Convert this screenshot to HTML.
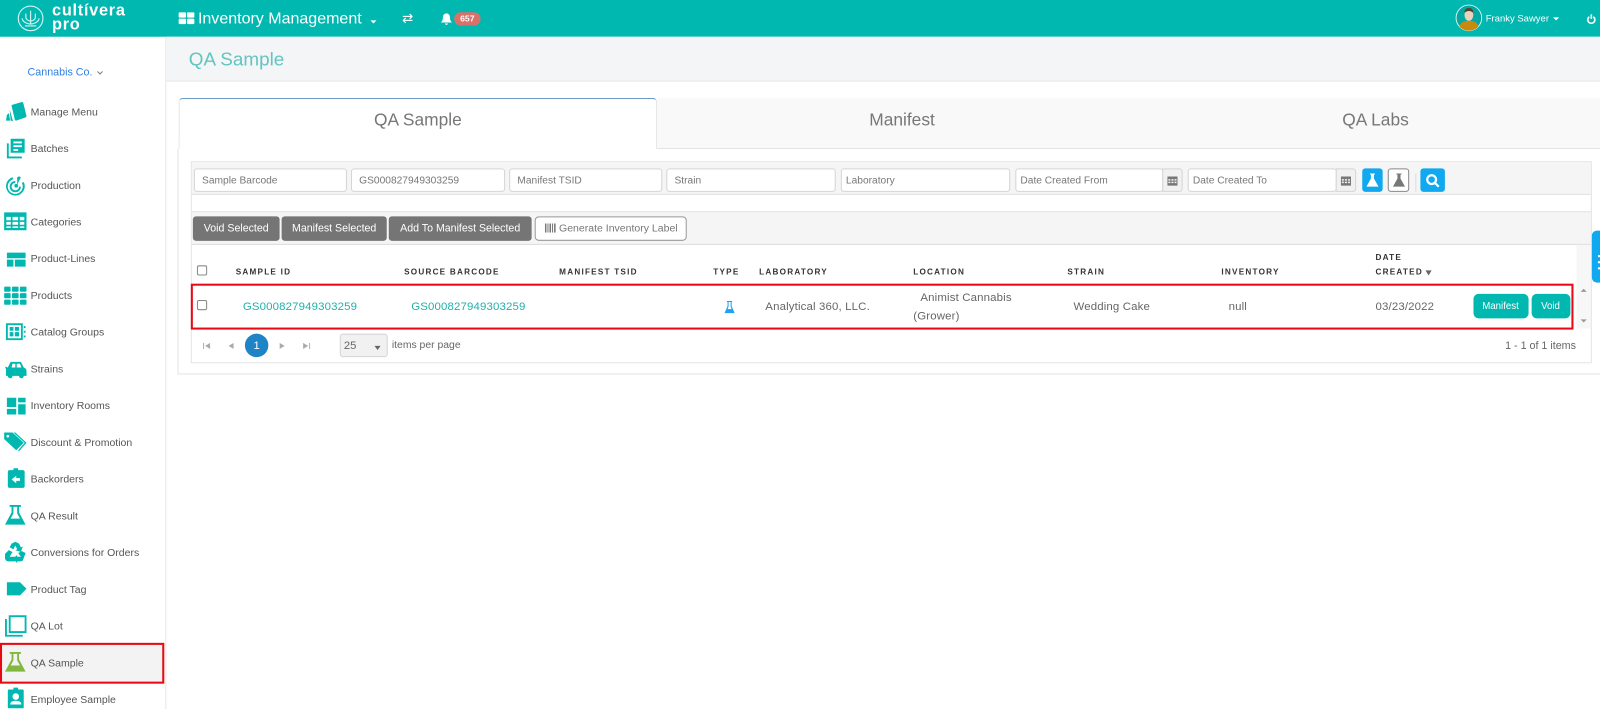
<!DOCTYPE html>
<html><head><meta charset="utf-8"><style>
*{box-sizing:border-box}
html,body{margin:0;padding:0;width:1600px;height:709px;overflow:hidden;background:#fff;font-family:"Liberation Sans",sans-serif;color:#666}
#w{position:absolute;left:0;top:0;width:1568px;height:695px;overflow:hidden;transform:scale(1.02041);transform-origin:0 0}
.a{position:absolute;white-space:nowrap}
.box{position:absolute}
.nav{position:absolute;left:30px;margin-top:1.700px;font-size:10.300px;color:#555;line-height:14px;white-space:nowrap}
.ic{position:absolute;left:4px;margin-top:1px;width:22px;height:22px;fill:#00b8b0}
.inp{position:absolute;top:165px;height:23px;background:#fff;border:1px solid #d5d5d5;border-radius:3px;font-size:10px;line-height:23px;color:#777;padding-left:7px;white-space:nowrap}
.cal{position:absolute;top:165px;width:20px;height:23px;background:#f1f1f1;border:1px solid #d5d5d5;border-radius:0 3px 3px 0}
.cal svg{position:absolute;left:4px;top:6px}
.gb{position:absolute;top:212px;height:24px;background:#757575;border-radius:3px;color:#fff;font-size:10.400px;line-height:26px;text-align:center;white-space:nowrap}
.th{position:absolute;font-size:8px;font-weight:bold;letter-spacing:1.200px;color:#333;white-space:nowrap;line-height:10px}
.td{position:absolute;font-size:11.200px;color:#666;letter-spacing:.15px;white-space:nowrap;line-height:14px}
.lk{color:#21b0aa}
.tb{position:absolute;top:288px;height:24px;background:#00b8b0;border-radius:5px;color:#fff;font-size:9.500px;line-height:25px;text-align:center}
.cb{position:absolute;width:10px;height:10px;border:1px solid #888;border-radius:2px;background:#fff}
.tab{position:absolute;top:96px;height:46px;font-size:17px;line-height:44px;text-align:center;color:#777}
</style></head><body><div id="w">

<!-- top bar -->
<div class="box" style="left:0;top:0;width:1568px;height:35.500px;background:#00b8b0"></div>
<svg class="box" style="left:17px;top:5px" width="26" height="26" viewBox="0 0 28 28" fill="none" stroke="#d6f3f1" stroke-width="1.200"><circle cx="14" cy="14" r="13"/><path d="M14 6v14M9 9v4q0 3 5 4M19 9v4q0 3-5 4M5 14q1 5 9 6M23 14q-1 5-9 6M8 22h12"/></svg>
<div class="a" style="left:51px;top:4px;font-size:16px;font-weight:bold;color:#fff;line-height:14px;letter-spacing:.7px">cultívera<br>pro</div>
<svg class="box" style="left:175px;top:12px" width="16" height="12" fill="#fff"><rect width="7.300" height="5.300" rx="1"/><rect x="8.200" width="7.300" height="5.300" rx="1"/><rect y="6.300" width="7.300" height="5.300" rx="1"/><rect x="8.200" y="6.300" width="7.300" height="5.300" rx="1"/></svg>
<div class="a" style="left:194px;top:10px;font-size:15.700px;color:#fff;line-height:18px">Inventory Management</div>
<div class="box" style="left:363px;top:20px;border:3px solid transparent;border-top-color:#fff"></div>
<div class="a" style="left:394px;top:11px;font-size:13px;color:#fff;line-height:15px;font-family:'DejaVu Sans',sans-serif">⇄</div>
<svg class="box" style="left:432px;top:13px" width="11" height="12" viewBox="0 0 11 12" fill="#fff"><path d="M5.500 0q3.500.5 3.500 4.500 0 3 2 4.500H0q2-1.500 2-4.500Q2 .5 5.500 0zM4 10h3q-.5 1.500-1.500 1.500T4 10z"/></svg>
<div class="a" style="left:445px;top:12px;width:26px;height:13px;border-radius:7px;background:#d9716b;color:#fff;font-size:8.500px;font-weight:bold;line-height:13px;text-align:center">657</div>
<svg class="box" style="left:1426px;top:4px" width="27" height="27" viewBox="0 0 28 28"><circle cx="14" cy="14" r="13" fill="#00a9a2" stroke="#d8f3f2"/><path d="M4.500 23q1-6 9.500-6t9.500 6q-4 4-9.500 4t-9.500-4z" fill="#c78a0c"/><ellipse cx="14" cy="11" rx="4.500" ry="6" fill="#ecd2bc"/><path d="M9.500 9q0-5 4.500-5t4.500 5q-2-2-4.500-2t-4.500 2z" fill="#5b4030"/></svg>
<div class="a" style="left:1456px;top:12px;font-size:9.300px;color:#fff;line-height:13px">Franky Sawyer</div>
<div class="box" style="left:1522px;top:17px;border:3px solid transparent;border-top-color:#fff"></div>
<svg class="box" style="left:1555px;top:14px" width="9" height="10" viewBox="0 0 9 10" fill="none" stroke="#fff" stroke-width="1.600"><path d="M2.500 2.500a3.500 3.500 0 1 0 4 0M4.500 0v4.500"/></svg>

<!-- sidebar -->
<div class="box" style="left:162px;top:36px;width:1px;height:660px;background:#e7e7e7"></div>
<div class="a" style="left:27px;top:64px;font-size:10.500px;color:#2f80e0;line-height:14px">Cannabis Co.</div>
<svg class="box" style="left:95px;top:68.500px" width="6" height="5" fill="none" stroke="#777"><path d="M.5 1l2.500 2.500L5.500 1"/></svg>

<svg class="ic" style="top:98px" viewBox="0 0 24 24"><path d="M9 4l10-3q1 0 1.500 1L24 16q0 1-1 1.500L13 21q-1 0-1.500-1L8 5q0-1 1-1zM6 9l3.500 12.500L7 21zM3 15l2-2 1.500 8H2z"/></svg>
<div class="nav" style="top:102px">Manage Menu</div>
<svg class="ic" style="top:134px" viewBox="0 0 24 24"><path d="M7 1h15v15H7zM10 4v2h9V4zM10 8v2h9V8zM10 12v2h5v-2z" fill-rule="evenodd"/><path d="M3 6h2v14h14v2H3z"/></svg>
<div class="nav" style="top:138px">Batches</div>
<svg class="ic" style="top:170px" viewBox="0 0 24 24"><path d="M9 3a10 10 0 1 0 12 5l-2 1a8 8 0 1 1-9-4z"/><path d="M12 7a6 6 0 1 0 6 6h-2a4 4 0 1 1-4-4z"/><circle cx="13" cy="12" r="2"/><path d="M14 3l2-1 2 1-4 8z"/></svg>
<div class="nav" style="top:174px">Production</div>
<svg class="ic" style="top:206px" viewBox="0 0 20 20"><path fill-rule="evenodd" d="M0 1h20v16H0zM2 5v3h4V5zM7.500 5v3h5V5zM14 5v3h4V5zM2 9.500v2.500h4V9.500zM7.500 9.500v2.500h5V9.500zM14 9.500v2.500h4V9.500zM2 13.500V15h4v-1.500zM7.500 13.500V15h5v-1.500zM14 13.500V15h4v-1.500z"/></svg>
<div class="nav" style="top:210px">Categories</div>
<svg class="ic" style="top:242px" viewBox="0 0 24 24"><path d="M3 5h20v6H3zM3 12.500h7V20H3zM11.500 12.500H23V20H11.500z"/></svg>
<div class="nav" style="top:246px">Product-Lines</div>
<svg class="ic" style="top:278px" viewBox="0 0 24 24"><rect y="2" width="7" height="5.500" rx="1"/><rect x="8.500" y="2" width="7" height="5.500" rx="1"/><rect x="17" y="2" width="7" height="5.500" rx="1"/><rect y="9" width="7" height="5.500" rx="1"/><rect x="8.500" y="9" width="7" height="5.500" rx="1"/><rect x="17" y="9" width="7" height="5.500" rx="1"/><rect y="16" width="7" height="5.500" rx="1"/><rect x="8.500" y="16" width="7" height="5.500" rx="1"/><rect x="17" y="16" width="7" height="5.500" rx="1"/></svg>
<div class="nav" style="top:282px">Products</div>
<svg class="ic" style="top:314px" viewBox="0 0 24 24"><path fill-rule="evenodd" d="M2 2h18v18H2zM4 4v14h14V4zM6 6h4v4H6zM11.500 6H16v4h-4.500zM6 11.500h4V16H6zM11.500 11.500H16V16h-4.500z"/><path d="M21 5h2v2h-2zM21 10h2v2h-2zM21 15h2v2h-2z"/></svg>
<div class="nav" style="top:318px">Catalog Groups</div>
<svg class="ic" style="top:350px" viewBox="0 0 24 24"><path d="M7 4h11l3 6q3 1 3 4v5h-3a2.500 2.500 0 0 1-5 0H9a2.500 2.500 0 0 1-5 0H2v-7l-1-3 3 1z"/><path d="M9 6h3v4H8zM13.500 6H17l1.500 4h-5z" fill="#fff"/></svg>
<div class="nav" style="top:354px">Strains</div>
<svg class="ic" style="top:386px" viewBox="0 0 24 24"><path d="M3 3h10v10H3zM15 3h8v5h-8zM15 10h8v11h-8zM3 15h10v6H3z"/></svg>
<div class="nav" style="top:390px">Inventory Rooms</div>
<svg class="ic" style="top:421px" viewBox="0 0 24 24"><path fill-rule="evenodd" d="M0 2h9l12 11-8 8L0 9zM4 4.500a1.500 1.500 0 1 0 .01 0z"/><path d="M12 2l12 11-8 9-1-1 7-8L10 2z"/></svg>
<div class="nav" style="top:426px">Discount &amp; Promotion</div>
<svg class="ic" style="top:457px" viewBox="0 0 24 24"><path fill-rule="evenodd" d="M6 3h4V1h5v2h5q2 0 2 2v15q0 2-2 2H6q-2 0-2-2V5q0-2 2-2zM8 13l5-4v2.500h4v3h-4V17z"/></svg>
<div class="nav" style="top:462px">Backorders</div>
<svg class="ic" style="top:493px" viewBox="0 0 24 24"><path fill-rule="evenodd" d="M6 1h12v2h-2v6l7 13H1L8 9V3H6zM10 3v7l-3 5.500h10L14 10V3z"/></svg>
<div class="nav" style="top:498px">QA Result</div>
<svg class="ic" style="top:529px" viewBox="0 0 24 24"><path d="M8 3l4-2 4 2 2 4 2-1-2 6-6-2 2-1-2-4-2 4-4-2zM1 14l4-4 4 2-3 5h6v5H5q-3 0-4-3zM23 13l-3 8q-1 1-3 1h-3v2l-4-5 4-4v2h4l-3-4 4-2z"/></svg>
<div class="nav" style="top:534px">Conversions for Orders</div>
<svg class="ic" style="top:565px" viewBox="0 0 24 24"><path d="M3 5h14l7 7-7 7H3z"/></svg>
<div class="nav" style="top:570px">Product Tag</div>
<svg class="ic" style="top:601px" viewBox="0 0 24 24"><path fill-rule="evenodd" d="M5 1h19v19H5zM7 3v15h15V3z"/><path d="M1 5h2v17h17v2H1z"/></svg>
<div class="nav" style="top:606px">QA Lot</div>

<div class="box" style="left:0;top:630px;width:161px;height:39.500px;background:#f3f3f3;border:2px solid #e80914"></div>
<svg class="ic" style="top:637px;fill:#82b83f" viewBox="0 0 24 24"><path fill-rule="evenodd" d="M6 1h12v2h-2v6l7 13H1L8 9V3H6zM10 3v7l-3 5.500h10L14 10V3z"/></svg>
<div class="nav" style="top:642px">QA Sample</div>
<svg class="ic" style="top:672px" viewBox="0 0 24 24"><path fill-rule="evenodd" d="M5 3h5V1h5v2h5q1 0 1 1v18q0 1-1 1H5q-1 0-1-1V4q0-1 1-1zM12.500 7a3.500 3.500 0 1 0 .01 0zM6.500 19q0-4 6-4t6 4z"/></svg>
<div class="nav" style="top:678px">Employee Sample</div>

<!-- header -->
<div class="box" style="left:163px;top:36px;width:1405px;height:44px;background:#f3f5f6;border-bottom:1px solid #e8e8e8"></div>
<div class="a" style="left:185px;top:46px;font-size:18.500px;color:#62c5c0;line-height:24px">QA Sample</div>

<!-- tabs -->
<div class="box" style="left:644px;top:96px;width:924px;height:50px;background:#f9f9f9;border-bottom:1px solid #e3e3e3"></div>
<div class="tab" style="left:175px;width:469px;height:50px;top:95.500px;background:#fff;border:1px solid #e4e4e4;border-top:1px solid #6a9bc9;border-bottom:0;border-radius:4px 4px 0 0;line-height:42px">QA Sample</div>
<div class="tab" style="left:644px;width:480px">Manifest</div>
<div class="tab" style="left:1124px;width:448px">QA Labs</div>
<div class="box" style="left:174px;top:146px;width:1px;height:221px;background:#e4e4e4"></div>
<div class="box" style="left:174px;top:366px;width:1394px;height:1px;background:#e4e4e4"></div>

<!-- grid container -->
<div class="box" style="left:187px;top:158px;width:1373px;height:198px;border:1px solid #e3e3e3"></div>
<div class="box" style="left:188px;top:159px;width:1371px;height:32px;background:#f5f5f5;border-bottom:1px solid #e3e3e3"></div>
<div class="box" style="left:188px;top:207px;width:1371px;height:33px;background:#f5f5f5;border-top:1px solid #e3e3e3;border-bottom:1px solid #dedede"></div>

<div class="inp" style="left:190px;width:150px">Sample Barcode</div>
<div class="inp" style="left:344px;width:151px">GS000827949303259</div>
<div class="inp" style="left:499px;width:150px">Manifest TSID</div>
<div class="inp" style="left:653px;width:166px">Strain</div>
<div class="inp" style="left:824px;width:166px;padding-left:4px">Laboratory</div>
<div class="inp" style="left:995px;width:145px;padding-left:4px">Date Created From</div>
<div class="cal" style="left:1139px"><svg width="10" height="10" fill="#777"><path fill-rule="evenodd" d="M0 1h10v9H0zM1 3.500v1.500h2V3.500zM4 3.500v1.500h2V3.500zM7 3.500v1.500h2V3.500zM1 6v1.500h2V6zM4 6v1.500h2V6zM7 6v1.500h2V6z"/></svg></div>
<div class="inp" style="left:1164px;width:146px;padding-left:4px">Date Created To</div>
<div class="cal" style="left:1309px"><svg width="10" height="10" fill="#777"><path fill-rule="evenodd" d="M0 1h10v9H0zM1 3.500v1.500h2V3.500zM4 3.500v1.500h2V3.500zM7 3.500v1.500h2V3.500zM1 6v1.500h2V6zM4 6v1.500h2V6zM7 6v1.500h2V6z"/></svg></div>
<div class="box" style="left:1335px;top:165px;width:20px;height:23px;background:#10a9f0;border-radius:3px"><svg style="position:absolute;left:4px;top:5px" width="12" height="13" viewBox="0 0 12 13" fill="#fff"><path d="M3.500 0h5v1H7.500v4L12 13H0L4.500 5V1h-1z"/></svg></div>
<div class="box" style="left:1360px;top:165px;width:21px;height:23px;background:#fff;border:1px solid #888;border-radius:3px"><svg style="position:absolute;left:3.500px;top:4px" width="12" height="13" viewBox="0 0 12 13" fill="#777"><path d="M3.500 0h5v1H7.500v4L12 13H0L4.500 5V1h-1z"/></svg></div>
<div class="box" style="left:1387px;top:170px;width:1px;height:18px;background:#ddd"></div>
<div class="box" style="left:1392px;top:165px;width:24px;height:23px;background:#10a9f0;border-radius:3px"><svg style="position:absolute;left:5px;top:5px" width="14" height="14" viewBox="0 0 14 14" fill="none" stroke="#fff" stroke-width="2.200"><circle cx="6" cy="6" r="4.300"/><path d="M9 9l4 4"/></svg></div>

<div class="gb" style="left:189px;width:85px">Void Selected</div>
<div class="gb" style="left:276px;width:103px">Manifest Selected</div>
<div class="gb" style="left:381px;width:140px">Add To Manifest Selected</div>
<div class="box" style="left:524px;top:212px;width:149px;height:24px;background:#fff;border:1px solid #999;border-radius:4px;font-size:10.300px;line-height:24px;color:#777;white-space:nowrap;padding-left:9px"><svg width="11" height="9" style="vertical-align:-1px" fill="#777"><path d="M0 0h1.500v9H0zM2.500 0h1v9h-1zM4.500 0h1.500v9H4.500zM7 0h1v9H7zM9 0h1.500v9H9z"/></svg> Generate Inventory Label</div>

<!-- table header -->
<div class="cb" style="left:193px;top:260px"></div>
<div class="th" style="left:231px;top:262px">SAMPLE ID</div>
<div class="th" style="left:396px;top:262px">SOURCE BARCODE</div>
<div class="th" style="left:548px;top:262px">MANIFEST TSID</div>
<div class="th" style="left:699px;top:262px">TYPE</div>
<div class="th" style="left:744px;top:262px">LABORATORY</div>
<div class="th" style="left:895px;top:262px">LOCATION</div>
<div class="th" style="left:1046px;top:262px">STRAIN</div>
<div class="th" style="left:1197px;top:262px">INVENTORY</div>
<div class="th" style="left:1348px;top:248px">DATE</div>
<div class="th" style="left:1348px;top:262px">CREATED</div>
<div class="box" style="left:1397px;top:265px;border:3px solid transparent;border-top:5px solid #666"></div>

<!-- row -->
<div class="box" style="left:1545px;top:240px;width:14px;height:82px;background:#f7f7f7"></div>
<div class="box" style="left:1549px;top:280px;border:3px solid transparent;border-bottom:3px solid #999"></div>
<div class="box" style="left:1549px;top:313px;border:3px solid transparent;border-top:3px solid #999"></div>
<div class="box" style="left:187px;top:278px;width:1355px;height:45px;border:2px solid #e80914"></div>
<div class="cb" style="left:193px;top:294px"></div>
<div class="td lk" style="left:238px;top:294px">GS000827949303259</div>
<div class="td lk" style="left:403px;top:294px">GS000827949303259</div>
<svg class="box" style="left:710px;top:295px" width="10" height="12" viewBox="0 0 10 12" fill="#1da1f2"><path fill-rule="evenodd" d="M2.500 0h5v1H7v4l3 7H0l3-7V1h-.5zM4 1v4.500L3 8h4L6 5.500V1z"/></svg>
<div class="td" style="left:750px;top:294px">Analytical 360, LLC.</div>
<div class="td" style="left:902px;top:285px">Animist Cannabis</div>
<div class="td" style="left:895px;top:303px">(Grower)</div>
<div class="td" style="left:1052px;top:294px">Wedding Cake</div>
<div class="td" style="left:1204px;top:294px">null</div>
<div class="td" style="left:1348px;top:294px">03/23/2022</div>
<div class="tb" style="left:1443.500px;width:54px">Manifest</div>
<div class="tb" style="left:1500.500px;width:38px">Void</div>

<!-- pager -->
<svg class="box" style="left:199px;top:336px" width="7" height="6" fill="#aaa"><path d="M0 0h1v6H0zM7 0v6L2 3z"/></svg>
<svg class="box" style="left:224px;top:336px" width="5" height="6" fill="#aaa"><path d="M5 0v6L0 3z"/></svg>
<div class="box" style="left:240px;top:327px;width:23px;height:23px;border-radius:50%;background:#1f84c6;color:#fff;font-size:11px;line-height:24px;text-align:center">1</div>
<svg class="box" style="left:274px;top:336px" width="5" height="6" fill="#aaa"><path d="M0 0v6l5-3z"/></svg>
<svg class="box" style="left:297px;top:336px" width="7" height="6" fill="#aaa"><path d="M0 0v6l5-3zM6 0h1v6H6z"/></svg>
<div class="box" style="left:333px;top:327px;width:47px;height:23px;background:#f1f1f1;border:1px solid #d5d5d5;border-radius:3px;font-size:11px;line-height:23px;color:#666;padding-left:3px">25</div>
<div class="box" style="left:367px;top:339px;border:3px solid transparent;border-top:4px solid #666"></div>
<div class="td" style="left:384px;top:332px;font-size:10.200px;letter-spacing:0">items per page</div>
<div class="td" style="left:1475px;top:332px;font-size:10.500px;letter-spacing:0">1 - 1 of 1 items</div>

<!-- right handle -->
<div class="box" style="left:1560px;top:226px;width:8px;height:51px;background:#10a9f0;border-radius:5px 0 0 5px"></div>
<div class="box" style="left:1566px;top:250px;width:2px;height:2px;background:#fff"></div>
<div class="box" style="left:1566px;top:256px;width:2px;height:2px;background:#fff"></div>
<div class="box" style="left:1566px;top:262px;width:2px;height:2px;background:#fff"></div>
</div></body></html>
